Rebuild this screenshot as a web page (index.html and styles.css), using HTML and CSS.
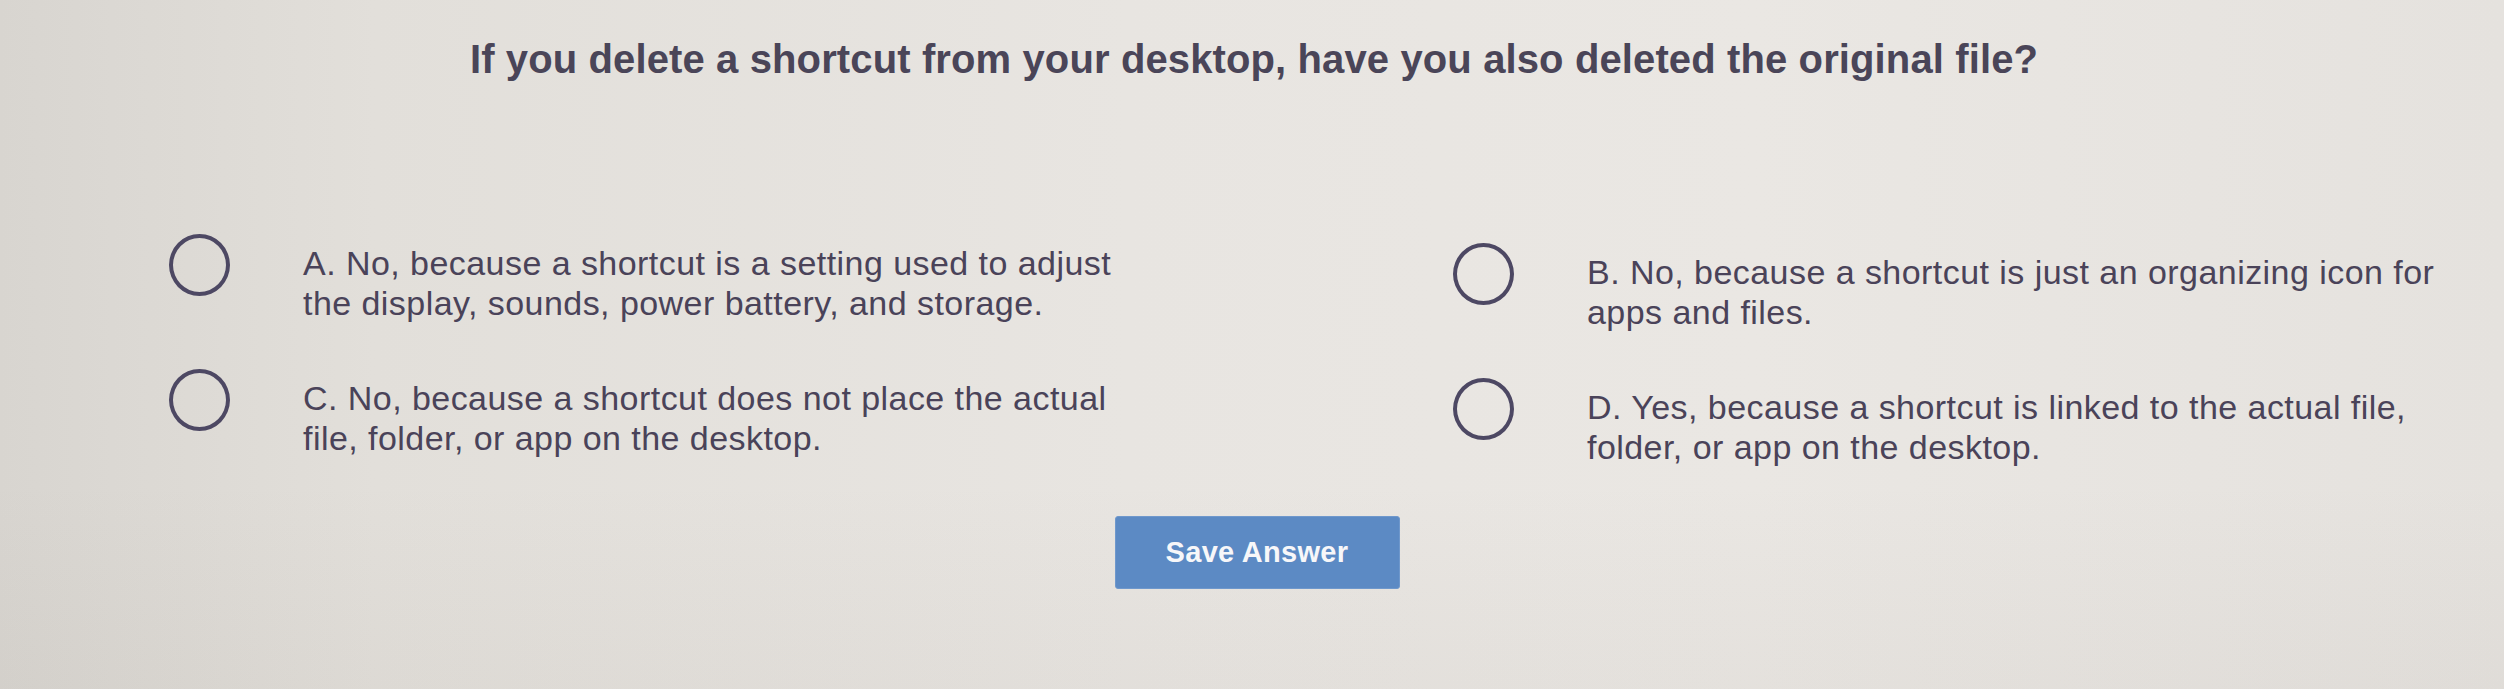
FILE: index.html
```html
<!DOCTYPE html>
<html lang="en">
<head>
<meta charset="utf-8">
<title>Question</title>
<link rel="stylesheet" href="styles.css">
</head>
<body>
<main class="page">
  <h1 class="question">If you delete a shortcut from your desktop, have you also deleted the original file?</h1>
  <div class="options">
    <label class="option">
      <span class="radio"></span>
      <span class="option-text">A. No, because a shortcut is a setting used to adjust the display, sounds, power battery, and storage.</span>
    </label>
    <label class="option option-right">
      <span class="radio"></span>
      <span class="option-text">B. No, because a shortcut is just an organizing icon for apps and files.</span>
    </label>
    <label class="option">
      <span class="radio"></span>
      <span class="option-text">C. No, because a shortcut does not place the actual file, folder, or app on the desktop.</span>
    </label>
    <label class="option option-right">
      <span class="radio"></span>
      <span class="option-text">D. Yes, because a shortcut is linked to the actual file, folder, or app on the desktop.</span>
    </label>
  </div>
  <div class="actions">
    <button class="save-btn" type="button">Save Answer</button>
  </div>
</main>
</body>
</html>
```
FILE: styles.css
```css
html, body {
  margin: 0;
  padding: 0;
}
body {
  width: 2504px;
  height: 689px;
  overflow: hidden;
  font-family: "Liberation Sans", Arial, sans-serif;
  color: #4a4359;
  background:
    linear-gradient(180deg, rgba(255,255,255,0) 0%, rgba(255,255,255,0) 70%, rgba(120,110,100,0.05) 100%),
    linear-gradient(90deg, #d8d5d0 0%, #e2dfda 15%, #e8e5e1 45%, #eae7e3 70%, #e5e2de 100%);
}
.page {
  display: flex;
  flex-direction: column;
  padding-top: 35px;
}
.question {
  margin: 0;
  font-size: 40px;
  line-height: 48px;
  font-weight: bold;
  letter-spacing: 0.12px;
  text-align: center;
  color: #4a4558;
  padding-left: 4px;
}
.options {
  display: grid;
  grid-template-columns: 1284px 1fr;
  row-gap: 37px;
  padding-left: 169px;
  margin-top: 151px;
}
.option {
  display: flex;
  align-items: flex-start;
  gap: 73px;
}
.option-right {
  padding-top: 9px;
}
.radio {
  flex: none;
  width: 53px;
  height: 54px;
  border: 4px solid #4d4863;
  border-radius: 50%;
}
.option-text {
  margin-top: 9px;
  max-width: 855px;
  font-size: 34px;
  line-height: 40px;
  letter-spacing: 0.45px;
}
.actions {
  display: flex;
  justify-content: center;
  margin-top: 49px;
  padding-left: 10px;
}
.save-btn {
  width: 285px;
  height: 73px;
  border: 1px solid #6f98cc;
  border-radius: 3px;
  background: #5c8ac4;
  color: #f7f7f9;
  font-family: "Liberation Sans", Arial, sans-serif;
  font-weight: bold;
  font-size: 29px;
  letter-spacing: 0.3px;
  padding: 0;
}
```
